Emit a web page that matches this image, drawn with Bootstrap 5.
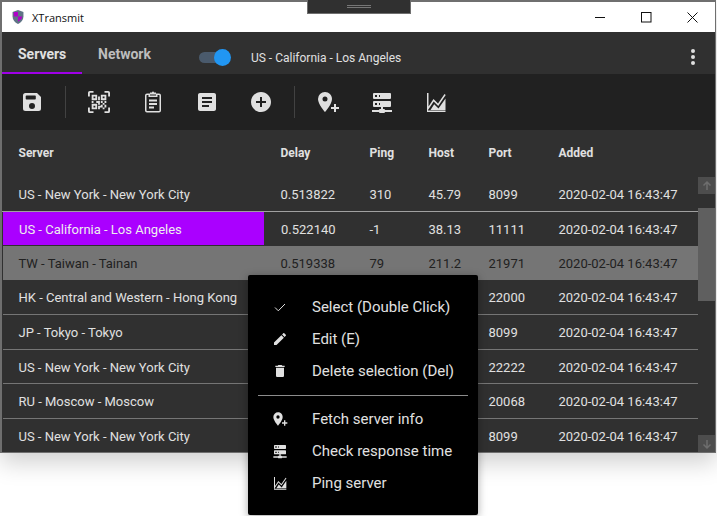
<!DOCTYPE html>
<html lang="en">

<head>
    <meta charset="UTF-8" />
    <meta name="viewport" content="width=device-width, initial-scale=1.0" />
    <title>XTransmit</title>
    <link href="https://cdn.jsdelivr.net/npm/bootstrap@5.3.3/dist/css/bootstrap.min.css" rel="stylesheet">
    <style>
        html, body { height: 516px; overflow: hidden; background: #fff; font-family: Roboto, sans-serif; }
        .app-window { width: 716px; height: 453px; border: solid #6f6f6f; border-width: 2px 1px 1px 2px; box-shadow: 0 10px 22px rgba(0,0,0,.18); position: relative; background: #303030; }
        .win-title { height: 30px; background: #fff; color: #111; font: 11px "Open Sans", "Liberation Sans", sans-serif; padding-left: 9px; }
        .win-title span { margin-left: 7px; }
        .win-btn { width: 46px; height: 30px; }
        .drag-handle { position: absolute; left: 305px; top: -2px; width: 104px; height: 14px; background: #303030; border: 1px solid #6f6f6f; border-top: 0; }
        .drag-handle i { display: block; width: 24px; height: 3px; border: solid #777; border-width: 1px 0; margin: 5px auto 0; }
        .tab-row { height: 42px; background: #303030; }
        .tab-row .nav-link { height: 42px; color: #bdbdbd; font-weight: 700; font-size: 14px; padding: 12px 16px 0; border-bottom: 2px solid transparent; }
        .tab-row .nav-link.active { color: #e0e0e0; border-bottom-color: #a000e8; }
        .tab-first { width: 80px; }
        .tab-toggle { width: 32px; height: 17px; margin-left: 32px; position: relative; top: 4px; }
        .tab-toggle b { position: absolute; left: 0; top: 3px; width: 28px; height: 11px; border-radius: 6px; background: #4a5a6c; }
        .tab-toggle i { position: absolute; right: 0; top: 0; width: 17px; height: 17px; border-radius: 50%; background: #2196f3; }
        .tab-server { font-size: 12px; color: #e0e0e0; margin-left: 20px; position: relative; top: 5px; }
        .kebab { width: 5px; margin-right: 19px; gap: 2px; position: relative; top: 4px; }
        .kebab i { width: 4px; height: 4px; border-radius: 50%; background: #e0e0e0; }
        .tool-row { height: 56px; background: #212121; padding-left: 3px; }
        .tool-btn { width: 54px; height: 56px; color: #e0e0e0; }
        .tool-sep { width: 1px; height: 32px; background: #424242; margin: 0 6px; }
        .srv-table { table-layout: fixed; width: 696px; margin: 0; font-size: 13px; color: #e0e0e0; }
        .table.srv-table > * > * > * { background: #303030; color: #e0e0e0; padding: 2px 0 0 16px; vertical-align: middle; border-bottom: 1px solid #757575; box-shadow: none; height: 34.5px; white-space: nowrap; overflow: hidden; }
        .table.srv-table thead th { height: 46.5px; font-size: 12px; font-weight: 700; border-bottom-color: #4a4a4a; padding-top: 0; }
        .table.srv-table tr.row-line > * { border-bottom-color: #a0a0a0; }
        .table.srv-table tr.row-hover > * { background: #757575; color: #212121; border-bottom: 0; }
        .table.srv-table td.cell-sel { background: #a0f; background-clip: padding-box; border: 1px solid #303030; color: #eee; }
        .table.srv-table tr.row-sel > * { border-bottom-color: #303030; }
        .table.srv-table tr:last-child > * { border-bottom: 0; }
        .scroll-col { width: 17px; background: #303030; }
        .srv-head-gap { height: 47px; }
        .scroll-btn { height: 17px; background: #4d4d4d; color: #6e6e6e; }
        .scroll-gap { height: 14px; }
        .scroll-thumb { height: 93px; background: #5f5f5f; }
        .ctx-menu { position: absolute; left: 246px; top: 273px; width: 230px; height: 240px; background: #000; border-radius: 2px; box-shadow: 0 2px 8px rgba(0,0,0,.35); padding: 16px 0; z-index: 5; }
        .ctx-item { height: 32px; color: #e0e0e0; font-size: 15px; padding-left: 24px; }
        .ctx-item svg { width: 16px; height: 16px; margin-right: 24px; }
        .ctx-line { height: 1px; background: #8c8c8c; margin: 8px 10px 7px; }
    </style>
</head>

<body>
    <svg width="0" height="0" class="d-block position-absolute">
        <symbol id="ic-save" viewBox="0 0 24 24"><path fill="currentColor" fill-rule="evenodd" d="M5.500 3H17l4 4v11.500a2.500 2.500 0 0 1-2.500 2.500h-13A2.500 2.500 0 0 1 3 18.500v-13A2.500 2.500 0 0 1 5.500 3zm1 2.500a.8.8 0 0 0-.8.8v2.400c0 .4.4.8.8.8h8.500a.8.8 0 0 0 .8-.8V6.300a.8.8 0 0 0-.8-.8zM12 13a3 3 0 1 0 0 6 3 3 0 0 0 0-6z"/></symbol>
        <symbol id="ic-qr" viewBox="0 0 24 24"><path fill="currentColor" d="M4,4H10V10H4V4M20,4V10H14V4H20M14,15H16V13H14V11H16V13H18V11H20V13H18V15H20V18H18V20H16V18H13V20H11V16H14V15M16,15V18H18V15H16M4,20V14H10V20H4M6,6V8H8V6H6M16,6V8H18V6H16M6,16V18H8V16H6M4,11H6V13H4V11M9,11H13V15H11V13H9V11M11,6H13V10H11V6M2,2V6H0V2A2,2 0 0,1 2,0H6V2H2M22,0A2,2 0 0,1 24,2V6H22V2H18V0H22M2,18V22H6V24H2A2,2 0 0,1 0,22V18H2M22,22V18H24V22A2,2 0 0,1 22,24H18V22H22Z"/></symbol>
        <symbol id="ic-clip" viewBox="0 0 24 24"><path fill="currentColor" fill-rule="evenodd" d="M6 3.500h3V5.500h6V3.500h3A2 2 0 0 1 20 5.500v15a2 2 0 0 1-2 2H6a2 2 0 0 1-2-2v-15a2 2 0 0 1 2-2zm0 1.500a.5.5 0 0 0-.5.5v15c0 .3.2.5.5.5h12a.5.5 0 0 0 .5-.5v-15a.5.5 0 0 0-.5-.5h-1.500v2H7.500V5z"/><path fill="currentColor" d="M9 4.500V2.500h2a1 1 0 0 1 2 0h2v2zM8 9.500h8v2H8zM8 13h8v2H8zM8 16.500h5v2H8z"/></symbol>
        <symbol id="ic-note" viewBox="0 0 24 24"><path fill="currentColor" d="M19 3H5c-1.100 0-2 .9-2 2v14c0 1.100.9 2 2 2h14c1.100 0 2-.9 2-2V5c0-1.100-.9-2-2-2zm-5 14H7v-2h7v2zm3-4H7v-2h10v2zm0-4H7V7h10v2z"/></symbol>
        <symbol id="ic-add" viewBox="0 0 24 24"><path fill="currentColor" d="M12 2C6.480 2 2 6.480 2 12s4.480 10 10 10 10-4.480 10-10S17.520 2 12 2zm5 11h-4v4h-2v-4H7v-2h4V7h2v4h4v2z"/></symbol>
        <symbol id="ic-pin" viewBox="0 0 24 24"><path fill="currentColor" d="M9,11.500A2.500,2.500 0 0,0 11.500,9A2.500,2.500 0 0,0 9,6.500A2.500,2.500 0 0,0 6.500,9A2.500,2.500 0 0,0 9,11.500M9,2C12.860,2 16,5.130 16,9C16,14.250 9,22 9,22C9,22 2,14.250 2,9A7,7 0 0,1 9,2M15,17H18V14H20V17H23V19H20V22H18V19H15V17Z"/></symbol>
        <symbol id="ic-srv" viewBox="0 0 24 24"><path fill="currentColor" d="M13,19H14A1,1 0 0,1 15,20H22V22H15A1,1 0 0,1 14,23H10A1,1 0 0,1 9,22H2V20H9A1,1 0 0,1 10,19H11V17H4A1,1 0 0,1 3,16V12A1,1 0 0,1 4,11H20A1,1 0 0,1 21,12V16A1,1 0 0,1 20,17H13V19M4,3H20A1,1 0 0,1 21,4V8A1,1 0 0,1 20,9H4A1,1 0 0,1 3,8V4A1,1 0 0,1 4,3M9,7H10V5H9V7M9,15H10V13H9V15M5,5V7H7V5H5M5,13V15H7V13H5Z"/></symbol>
        <symbol id="ic-chart" viewBox="0 0 24 24"><path fill="currentColor" d="M3 3h1.500v13.500L9.500 9l4.500 4.500L20.500 4l1.200.9-7.500 11-4.500-4.500-5.700 8.500V20.500H21.500V22H3z"/><path fill="currentColor" d="M6.500 20l3.700-5.700 4.300 4.300 7-10.100V20z"/></symbol>
        <symbol id="ic-check" viewBox="0 0 16 16"><path fill="none" stroke="currentColor" stroke-width="1" d="M3 8.500l3.300 3.300L13 5"/></symbol>
        <symbol id="ic-edit" viewBox="0 0 24 24"><path fill="currentColor" d="M3 17.250V21h3.750L17.810 9.940l-3.750-3.750L3 17.250zM20.710 7.040c.39-.39.39-1.020 0-1.410l-2.340-2.340c-.39-.39-1.020-.39-1.410 0l-1.830 1.830 3.750 3.750 1.830-1.830z"/></symbol>
        <symbol id="ic-del" viewBox="0 0 24 24"><path fill="currentColor" d="M6 19c0 1.100.9 2 2 2h8c1.100 0 2-.9 2-2V7H6v12zM19 4h-3.500l-1-1h-5l-1 1H5v2h14V4z"/></symbol>
    </svg>

    <div class="app-window d-flex flex-column">
        <div class="win-title d-flex align-items-center">
            <svg width="14" height="16" viewBox="0 0 18 20">
                <path fill="#5f7485" d="M9 1l7 2.500v6c0 4.500-3 7.800-7 9.500-4-1.700-7-5-7-9.500v-6z"/>
                <path fill="#b000c8" d="M9 3.500H3.500v6H9zM9 9.500h5.500c-.3 2.800-2.500 5-5.500 6.500z"/>
            </svg>
            <span class="flex-grow-1">XTransmit</span>
            <div class="win-btn d-flex align-items-center justify-content-center"><svg width="11" height="11"><path d="M0 5.500h10" stroke="#111"/></svg></div>
            <div class="win-btn d-flex align-items-center justify-content-center"><svg width="11" height="11"><rect x=".5" y=".5" width="9.500" height="9.500" fill="none" stroke="#111"/></svg></div>
            <div class="win-btn d-flex align-items-center justify-content-center"><svg width="11" height="11"><path d="M.5.500l10 10M10.500.500l-10 10" stroke="#111"/></svg></div>
        </div>
        <div class="drag-handle"><i></i></div>

        <div class="tab-row d-flex align-items-start">
            <ul class="nav">
                <li class="nav-item"><a class="nav-link active tab-first" href="#">Servers</a></li>
                <li class="nav-item"><a class="nav-link" href="#">Network</a></li>
            </ul>
            <div class="tab-toggle align-self-center"><b></b><i></i></div>
            <span class="tab-server align-self-center flex-grow-1">US - California - Los Angeles</span>
            <div class="kebab d-flex flex-column align-self-center"><i></i><i></i><i></i></div>
        </div>

        <div class="tool-row d-flex align-items-center">
            <div class="tool-btn d-flex align-items-center justify-content-center"><svg width="24" height="24"><use href="#ic-save"/></svg></div>
            <div class="tool-sep"></div>
            <div class="tool-btn d-flex align-items-center justify-content-center"><svg width="22" height="22"><use href="#ic-qr"/></svg></div>
            <div class="tool-btn d-flex align-items-center justify-content-center"><svg width="24" height="24"><use href="#ic-clip"/></svg></div>
            <div class="tool-btn d-flex align-items-center justify-content-center"><svg width="24" height="24"><use href="#ic-note"/></svg></div>
            <div class="tool-btn d-flex align-items-center justify-content-center"><svg width="24" height="24"><use href="#ic-add"/></svg></div>
            <div class="tool-sep"></div>
            <div class="tool-btn d-flex align-items-center justify-content-center"><svg width="24" height="24"><use href="#ic-pin"/></svg></div>
            <div class="tool-btn d-flex align-items-center justify-content-center"><svg width="24" height="24"><use href="#ic-srv"/></svg></div>
            <div class="tool-btn d-flex align-items-center justify-content-center"><svg width="24" height="24"><use href="#ic-chart"/></svg></div>
        </div>

        <div class="d-flex flex-grow-1 overflow-hidden">
            <table class="table srv-table">
                <colgroup>
                    <col style="width:262px"><col style="width:89px"><col style="width:59px"><col style="width:60px"><col style="width:70px"><col>
                </colgroup>
                <thead>
                    <tr><th>Server</th><th>Delay</th><th>Ping</th><th>Host</th><th>Port</th><th>Added</th></tr>
                </thead>
                <tbody id="rows"></tbody>
            </table>
            <div class="scroll-col d-flex flex-column">
                <div class="srv-head-gap"></div>
                <div class="scroll-btn d-flex justify-content-center align-items-center"><svg width="10" height="10" viewBox="0 0 10 10"><path d="M5 1v8M1.500 4.500L5 1l3.500 3.500" fill="none" stroke="currentColor" stroke-width="1.500"/></svg></div>
                <div class="scroll-gap"></div>
                <div class="scroll-thumb"></div>
                <div class="flex-grow-1"></div>
                <div class="scroll-btn d-flex justify-content-center align-items-center"><svg width="10" height="10" viewBox="0 0 10 10"><path d="M5 9V1M1.500 5.500L5 9l3.500-3.500" fill="none" stroke="currentColor" stroke-width="1.500"/></svg></div>
            </div>
        </div>

        <div class="ctx-menu">
            <div class="ctx-item d-flex align-items-center"><svg><use href="#ic-check"/></svg>Select (Double Click)</div>
            <div class="ctx-item d-flex align-items-center"><svg><use href="#ic-edit"/></svg>Edit (E)</div>
            <div class="ctx-item d-flex align-items-center"><svg><use href="#ic-del"/></svg>Delete selection (Del)</div>
            <div class="ctx-line"></div>
            <div class="ctx-item d-flex align-items-center"><svg><use href="#ic-pin"/></svg>Fetch server info</div>
            <div class="ctx-item d-flex align-items-center"><svg><use href="#ic-srv"/></svg>Check response time</div>
            <div class="ctx-item d-flex align-items-center"><svg><use href="#ic-chart"/></svg>Ping server</div>
        </div>
    </div>

    <script>
        // delay, ping and host of the lower rows sit behind the context menu
        const servers = [
            ['US - New York - New York City', '0.513822', '310', '45.79', '8099', 'row-line'],
            ['US - California - Los Angeles', '0.522140', '-1', '38.13', '11111', 'row-sel'],
            ['TW - Taiwan - Tainan', '0.519338', '79', '211.2', '21971', 'row-hover'],
            ['HK - Central and Western - Hong Kong', '', '', '', '22000', ''],
            ['JP - Tokyo - Tokyo', '', '', '', '8099', ''],
            ['US - New York - New York City', '', '', '', '22222', ''],
            ['RU - Moscow - Moscow', '', '', '', '20068', ''],
            ['US - New York - New York City', '', '', '', '8099', '']
        ];

        document.getElementById('rows').innerHTML = servers.map(s => `
            <tr class="${s[5]}">
                <td class="${s[5] === 'row-sel' ? 'cell-sel' : ''}">${s[0]}</td>
                <td>${s[1]}</td><td>${s[2]}</td><td>${s[3]}</td><td>${s[4]}</td>
                <td>2020-02-04 16:43:47</td>
            </tr>`).join('');
    </script>
</body>

</html>
